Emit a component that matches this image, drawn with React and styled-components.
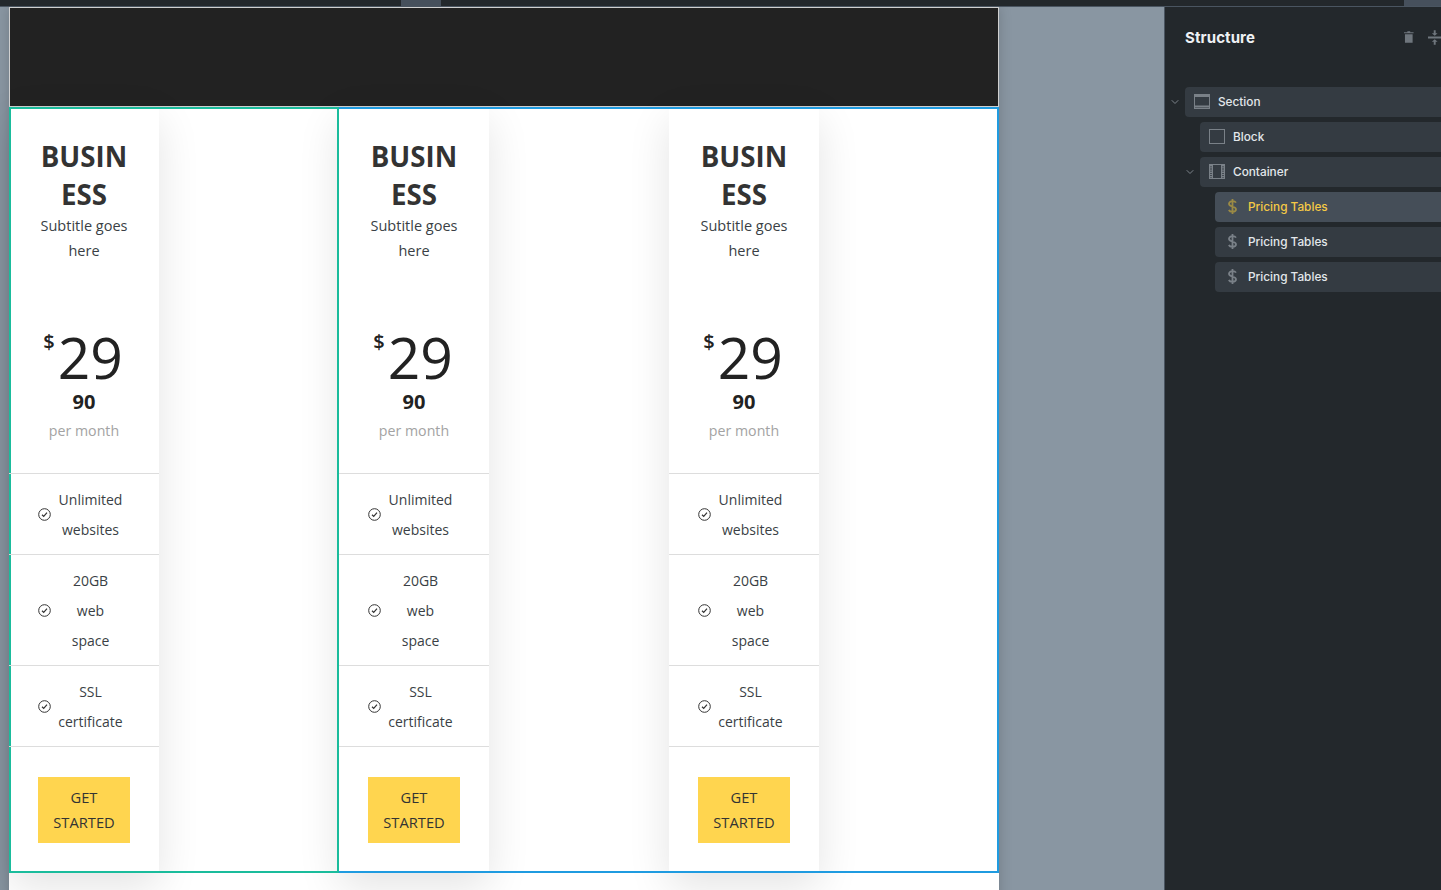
import React from "react";
import styled, { createGlobalStyle } from "styled-components";
import { ChevronDown } from "lucide-react";

const Global = createGlobalStyle`
  html, body { margin: 0; padding: 0; height: 100%; overflow: hidden; }
  * { box-sizing: border-box; }
  #root { height: 100%; }
`;

const Shell = styled.div`
  height: 890px;
  display: flex;
  flex-direction: column;
  background: #8996a2;
  overflow: hidden;
`;

const TopBar = styled.div`
  height: 7px;
  flex: none;
  display: flex;
  background: #23282c;
  border-bottom: 1px solid #4a5561;
`;

const TopTab = styled.div`
  height: 6px;
  width: ${(p) => p.$w}px;
  margin-left: ${(p) => p.$ml}px;
  background: #46505c;
`;

const Main = styled.div`
  flex: 1;
  min-height: 0;
  display: flex;
`;

const Canvas = styled.div`
  flex: 1;
  min-width: 0;
  padding-left: 9px;
  overflow: hidden;
`;

const Page = styled.div`
  width: 990px;
  height: 900px;
  background: #fff;
  box-shadow: 0 0 12px rgba(0, 0, 0, 0.18);
`;

const DarkHeader = styled.div`
  height: 100px;
  background: #222;
  border: 1px solid #d0d0d0;
`;

const Section = styled.div`
  position: relative;
  display: grid;
  grid-template-columns: repeat(3, 330px);
  &::after {
    content: "";
    position: absolute;
    inset: 0;
    border: 2px solid #1f9be0;
    pointer-events: none;
  }
`;

const Column = styled.div`
  position: relative;
  &::after {
    content: "";
    position: absolute;
    inset: 0;
    z-index: 2;
    border: 2px solid ${(p) => (p.$selected ? "#1abc9c" : "transparent")};
    pointer-events: none;
  }
`;

const Card = styled.div`
  width: 150px;
  height: 766px;
  background: #fff;
  box-shadow: 0 14px 40px rgba(0, 0, 0, 0.11);
  font-family: "Open Sans", "Noto Sans", sans-serif;
  color: #3a3f45;
  text-align: center;
`;

const CardHead = styled.div`
  height: 366px;
  padding: 30px 29px 0;
`;

const Title = styled.div`
  font-size: 27.7px;
  line-height: 38px;
  font-weight: 700;
  color: #333;
  overflow-wrap: anywhere;
`;

const Subtitle = styled.div`
  font-size: 14.5px;
  line-height: 25px;
`;

const Price = styled.div`
  margin-top: 63px;
  padding-right: 2px;
  display: flex;
  justify-content: center;
  align-items: flex-start;
  height: 62px;
  color: #222;
`;

const Currency = styled.span`
  font-size: 20px;
  line-height: 26px;
  margin-top: 3px;
  font-weight: 600;
  margin-right: 3px;
`;

const Amount = styled.span`
  font-size: 57px;
  line-height: 62px;
  font-weight: 400;
`;

const Cents = styled.div`
  margin-top: 1px;
  font-size: 20px;
  line-height: 26px;
  font-weight: 700;
  color: #222;
`;

const Period = styled.div`
  margin-top: 3px;
  font-size: 14.2px;
  line-height: 26px;
  color: #a3a3a3;
`;

const Feature = styled.div`
  position: relative;
  z-index: 3;
  display: flex;
  align-items: center;
  padding: 10px 29px;
  border-top: 1px solid #ddd;
`;

const TickMark = styled.svg`
  flex: none;
  width: 13px;
  height: 13px;
  color: #333;
`;

const FeatureText = styled.div`
  flex: 1;
  font-size: 14px;
  line-height: 30px;
  position: relative;
  top: 1px;
`;

const Line = styled.div`
  white-space: nowrap;
`;

const Footer = styled.div`
  position: relative;
  z-index: 3;
  padding: 30px 29px;
  border-top: 1px solid #ddd;
`;

const Cta = styled.button`
  display: block;
  width: 92px;
  height: 66px;
  padding: 8px 14px;
  border: 0;
  background: #ffd54f;
  color: #333;
  font: 400 14.7px/25px "Open Sans", "Noto Sans", sans-serif;
`;

const Panel = styled.aside`
  width: 277px;
  flex: none;
  background: #23282c;
  border-left: 1px solid #4a5561;
  font-family: Inter, "Liberation Sans", sans-serif;
  overflow: hidden;
`;

const PanelHead = styled.div`
  height: 80px;
  padding: 20px 0 0 20px;
  display: flex;
  align-items: flex-start;
`;

const PanelTitle = styled.div`
  flex: 1;
  font-size: 15px;
  line-height: 22px;
  font-weight: 700;
  color: #eef1f4;
  letter-spacing: 0.1px;
`;

const HeadIcons = styled.div`
  display: flex;
  gap: 14px;
  width: 37px;
  height: 20px;
  align-items: center;
  color: #6f767d;
  flex: none;
  overflow: hidden;
`;

const Tree = styled.div`
  display: flex;
  flex-direction: column;
  gap: 5px;
`;

const TreeRow = styled.div`
  display: flex;
  align-items: center;
  height: 30px;
  margin-left: ${(p) => p.$level * 15 + 20}px;
  padding: 0 0 1px 9px;
  position: relative;
  border-radius: 4px 0 0 4px;
  background: ${(p) => (p.$active ? "#454e58" : "#343b42")};
  color: ${(p) => (p.$active ? "#f5c945" : "#e3e7eb")};
  font-size: 11.8px;
  font-weight: 500;
`;

const Chevron = styled(ChevronDown)`
  position: absolute;
  left: -16px;
  top: 9px;
  width: 12px;
  height: 12px;
  color: #7c838a;
`;

const IconSlot = styled.span`
  display: flex;
  align-items: center;
  justify-content: center;
  width: 16px;
  height: 15px;
  margin-right: 8px;
  flex: none;
  color: ${(p) => (p.$active ? "#9b8a45" : "#7a8188")};
`;

const Tick = () => (
  <TickMark viewBox="0 0 13 13" fill="none" stroke="currentColor">
    <circle cx="6.5" cy="6.5" r="5.8" strokeWidth="1" />
    <path d="M4 6.800 5.700 8.400 9 4.600" strokeWidth="1.2" />
  </TickMark>
);

const SectionIcon = () => (
  <svg width="16" height="15" viewBox="0 0 16 15" fill="none" stroke="currentColor">
    <rect x="0.5" y="0.5" width="15" height="14" />
    <path d="M1 2h14M1 12.500h14" strokeWidth="2" />
  </svg>
);

const BlockIcon = () => (
  <svg width="16" height="15" viewBox="0 0 16 15" fill="none" stroke="currentColor">
    <rect x="0.5" y="0.5" width="15" height="14" />
  </svg>
);

const ContainerIcon = () => (
  <svg width="16" height="15" viewBox="0 0 16 15" fill="none" stroke="currentColor">
    <rect x="0.5" y="0.5" width="15" height="14" />
    <path d="M3.500 1v13M12.500 1v13" />
    <path d="M2 1v13M14 1v13" strokeWidth="2" strokeDasharray="1.4 0.8" />
  </svg>
);

const DollarIcon = () => (
  <svg width="9" height="15" viewBox="0 0 9 15" fill="none" stroke="currentColor" strokeWidth="1.8">
    <path d="M4.500 0v15M8 3.600C7.400 2.600 6.200 2.200 4.500 2.200 2.400 2.200 1 3.200 1 4.800c0 3.600 7 1.900 7 5.500 0 1.600-1.500 2.500-3.500 2.500-1.800 0-3.100-.6-3.700-1.800" />
  </svg>
);

const TrashIcon = () => (
  <svg width="10" height="12" viewBox="0 0 10 12" fill="currentColor">
    <path d="M3.500 0h3v1H10v1.200H0V1h3.500zM1 3h8v9H1z" />
  </svg>
);

const CollapseIcon = () => (
  <svg width="14" height="15" viewBox="0 0 14 15" fill="currentColor">
    <path d="M0 6.500h14v2H0zM6 0h2v3h2L7 5.700 4 3h2zM7 9.300 10 12H8v3H6v-3H4z" />
  </svg>
);

const features = [
  ["Unlimited", "websites"],
  ["20GB", "web", "space"],
  ["SSL", "certificate"],
];

const PricingCard = ({ selected }) => (
  <Column $selected={selected}>
    <Card>
      <CardHead>
        <Title>BUSINESS</Title>
        <Subtitle>Subtitle goes here</Subtitle>
        <Price>
          <Currency>$</Currency>
          <Amount>29</Amount>
        </Price>
        <Cents>90</Cents>
        <Period>per month</Period>
      </CardHead>
      {features.map((lines) => (
        <Feature key={lines[0]}>
          <Tick />
          <FeatureText>
            {lines.map((l) => (
              <Line key={l}>{l}</Line>
            ))}
          </FeatureText>
        </Feature>
      ))}
      <Footer>
        <Cta>GET STARTED</Cta>
      </Footer>
    </Card>
  </Column>
);

export default function App() {
  return (
    <Shell>
      <Global />
      <TopBar>
        <TopTab $ml={401} $w={40} />
        <TopTab $ml={963} $w={37} />
      </TopBar>
      <Main>
        <Canvas>
          <Page>
            <DarkHeader />
            <Section>
              <PricingCard selected />
              <PricingCard />
              <PricingCard />
            </Section>
          </Page>
        </Canvas>
        <Panel>
          <PanelHead>
            <PanelTitle>Structure</PanelTitle>
            <HeadIcons>
              <TrashIcon />
              <CollapseIcon />
            </HeadIcons>
          </PanelHead>
          <Tree>
            <TreeRow $level={0}>
              <Chevron />
              <IconSlot><SectionIcon /></IconSlot>
              Section
            </TreeRow>
            <TreeRow $level={1}>
              <IconSlot><BlockIcon /></IconSlot>
              Block
            </TreeRow>
            <TreeRow $level={1}>
              <Chevron />
              <IconSlot><ContainerIcon /></IconSlot>
              Container
            </TreeRow>
            <TreeRow $level={2} $active>
              <IconSlot $active><DollarIcon /></IconSlot>
              Pricing Tables
            </TreeRow>
            <TreeRow $level={2}>
              <IconSlot><DollarIcon /></IconSlot>
              Pricing Tables
            </TreeRow>
            <TreeRow $level={2}>
              <IconSlot><DollarIcon /></IconSlot>
              Pricing Tables
            </TreeRow>
          </Tree>
        </Panel>
      </Main>
    </Shell>
  );
}
